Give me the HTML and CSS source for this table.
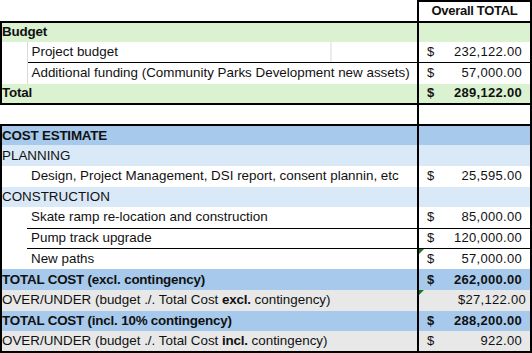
FILE: index.html
```html
<!DOCTYPE html>
<html lang="en">
<head>
<meta charset="utf-8">
<title>Budget</title>
<link rel="stylesheet" href="styles.css">
</head>
<body>
<table class="sheet">
  <colgroup><col class="c-ind"><col class="c-lab"><col class="c-val"></colgroup>
  <tr class="r-head">
    <td class="plain" colspan="2"></td>
    <td class="val head">Overall TOTAL</td>
  </tr>
  <tr class="green blk-top">
    <td class="lab first b" colspan="2">Budget</td>
    <td class="val"></td>
  </tr>
  <tr class="white">
    <td class="ind first grid-r"></td>
    <td class="lab sub split">Project budget</td>
    <td class="val"><div class="acc"><span>$</span><span>232,122.00</span></div></td>
  </tr>
  <tr class="white">
    <td class="ind first grid-r"></td>
    <td class="lab sub line-t">Additional funding (Community Parks Development new assets)</td>
    <td class="val line-t"><div class="acc"><span>$</span><span>57,000.00</span></div></td>
  </tr>
  <tr class="green blk-bot">
    <td class="lab first b" colspan="2">Total</td>
    <td class="val b num-b"><div class="acc"><span>$</span><span>289,122.00</span></div></td>
  </tr>
  <tr class="gap">
    <td class="plain" colspan="2"></td>
    <td class="val"></td>
  </tr>
  <tr class="blue blk-top">
    <td class="lab first b" colspan="2">COST ESTIMATE</td>
    <td class="val"></td>
  </tr>
  <tr class="lblue">
    <td class="lab first" colspan="2">PLANNING</td>
    <td class="val"></td>
  </tr>
  <tr class="white">
    <td class="ind first"></td>
    <td class="lab sub">Design, Project Management, DSI report, consent plannin, etc</td>
    <td class="val"><div class="acc"><span>$</span><span>25,595.00</span></div></td>
  </tr>
  <tr class="lblue">
    <td class="lab first" colspan="2">CONSTRUCTION</td>
    <td class="val"></td>
  </tr>
  <tr class="white">
    <td class="ind first"></td>
    <td class="lab sub">Skate ramp re-location and construction</td>
    <td class="val"><div class="acc"><span>$</span><span>85,000.00</span></div></td>
  </tr>
  <tr class="white">
    <td class="ind first"></td>
    <td class="lab sub line-t">Pump track upgrade</td>
    <td class="val line-t"><div class="acc"><span>$</span><span>120,000.00</span></div></td>
  </tr>
  <tr class="white">
    <td class="ind first"></td>
    <td class="lab sub line-t">New paths</td>
    <td class="val line-t flag"><div class="acc"><span>$</span><span>57,000.00</span></div></td>
  </tr>
  <tr class="blue">
    <td class="lab first b" colspan="2">TOTAL COST (excl. contingency)</td>
    <td class="val num-b"><div class="acc"><span>$</span><span>262,000.00</span></div></td>
  </tr>
  <tr class="grey">
    <td class="lab first" colspan="2">OVER/UNDER (budget ./. Total Cost <b>excl.</b> contingency)</td>
    <td class="val flag"><div class="cur">$27,122.00</div></td>
  </tr>
  <tr class="blue">
    <td class="lab first b" colspan="2">TOTAL COST (incl. 10% contingency)</td>
    <td class="val num-b"><div class="acc"><span>$</span><span>288,200.00</span></div></td>
  </tr>
  <tr class="grey blk-bot">
    <td class="lab first" colspan="2">OVER/UNDER (budget ./. Total Cost <b>incl.</b> contingency)</td>
    <td class="val"><div class="acc"><span>$</span><span>922.00</span></div></td>
  </tr>
</table>
</body>
</html>
```

FILE: styles.css
```css
html, body {
  margin: 0;
  background: #ffffff;
}

body {
  font-family: "Liberation Sans", Arial, sans-serif;
  font-size: 13.4px;
  color: #111;
}

.sheet {
  border-collapse: collapse;
  table-layout: fixed;
  width: 530px;
}

.c-ind { width: 26px; }
.c-lab { width: 391px; }
.c-val { width: 113px; }

.sheet tr {
  height: 20.65px;
}

.sheet td {
  padding: 0;
  white-space: nowrap;
  overflow: visible;
  vertical-align: middle;
  line-height: 16px;
}

.lab { padding-left: 2px; }
.lab.sub { padding-left: 4px; }

.lab.b, .lab b {
  font-weight: bold;
  letter-spacing: -0.2px;
}

/* row fills */
.green td { background: #daf2d0; }
.blue td { background: #a6c9ec; }
.lblue td { background: #dae9f8; }
.grey td { background: #e8e8e8; }
.white td { background: #ffffff; }

/* block outlines */
.first { border-left: 2px solid #000; }
.val {
  border-left: 2px solid #000;
  border-right: 2px solid #000;
  position: relative;
}
.blk-top td { border-top: 2px solid #000; }
.blk-bot td { border-bottom: 2px solid #000; }

.head {
  border-top: 2px solid #000;
  font-weight: bold;
  font-size: 13px;
  letter-spacing: -0.3px;
  text-align: center;
}

.grid-r { border-right: 1px solid #d9d9d9; }

.split {
  background-image: linear-gradient(to right, transparent 303px, #d9d9d9 303px, #d9d9d9 304px, transparent 304px) !important;
}

.line-t { border-top: 1px solid #000; }

/* number cells */
.acc {
  display: flex;
  justify-content: space-between;
  padding: 0 8px 0 8px;
  font-size: 13px;
  letter-spacing: 0.3px;
}

.num-b .acc { font-weight: bold; }

.cur {
  text-align: right;
  padding-right: 4px;
  font-size: 13px;
  letter-spacing: 0.3px;
}

/* excel error indicator */
.flag::before {
  content: "";
  position: absolute;
  left: 0;
  top: 0;
  border-top: 5px solid #1a7a22;
  border-right: 5px solid transparent;
}
```
